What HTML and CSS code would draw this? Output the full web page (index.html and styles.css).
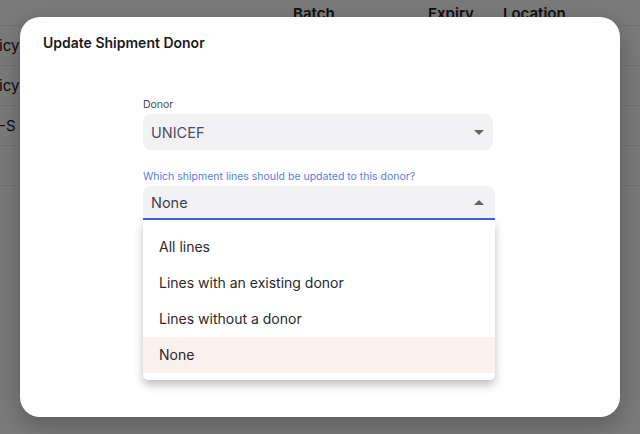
FILE: index.html
```html
<!DOCTYPE html>
<html lang="en">
<head>
    <meta charset="UTF-8">
    <title>Update Shipment Donor</title>
    <link rel="stylesheet" href="styles.css">
</head>
<body>
    <div class="page">
        <div class="table-head">
            <span class="col-name"></span>
            <span class="col-batch">Batch</span>
            <span class="col-expiry">Expiry</span>
            <span class="col-location">Location</span>
        </div>
        <div class="table-row"><span class="col-name">icy</span></div>
        <div class="table-row"><span class="col-name">icy</span></div>
        <div class="table-row"><span class="col-name">-S</span></div>
        <div class="table-row"><span class="col-name"></span></div>
    </div>

    <div class="overlay">
        <div class="dialog">
            <h1>Update Shipment Donor</h1>

            <div class="form">
                <label class="field-label">Donor</label>
                <div class="select">
                    <span>UNICEF</span>
                    <span class="arrow down"></span>
                </div>

                <label class="field-label focused">Which shipment lines should be updated to this donor?</label>
                <div class="dropdown">
                    <div class="select open">
                        <span>None</span>
                        <span class="arrow up"></span>
                    </div>
                    <ul class="menu">
                        <li>All lines</li>
                        <li>Lines with an existing donor</li>
                        <li>Lines without a donor</li>
                        <li class="selected">None</li>
                    </ul>
                </div>
            </div>
        </div>
    </div>
</body>
</html>
```

FILE: styles.css
```css
* { box-sizing: border-box; }
html, body { margin: 0; height: 100%; }
body { font-family: 'Inter', 'Roboto', sans-serif; background-color: #f4f4f4; overflow: hidden; position: relative; }

.page { color: #222; }
.table-head, .table-row { display: grid; grid-template-columns: 280px 148px 75px 1fr; align-items: center; border-bottom: 1px solid #e2e2e2; }
.table-head { height: 26px; font-weight: 600; font-size: 15px; padding-top: 2px; }
.table-head .col-batch { padding-left: 13px; }
.table-row { height: 40px; font-size: 15px; }
.table-row .col-name { margin-left: -1px; }

.overlay { position: absolute; inset: 0; background-color: rgba(0,0,0,0.5); display: flex; align-items: center; justify-content: center; }
.dialog { width: 600px; height: 400px; background-color: white; border-radius: 20px; padding: 19px 23px; box-shadow: 0 8px 24px rgba(0,0,0,0.25); }
.dialog h1 { font-size: 14px; font-weight: 600; color: #1a1a1a; margin: 0; line-height: 14px; }

.form { width: 352px; margin: 49px 0 0 100px; }
.field-label { display: block; font-size: 10.5px; color: #4a4a4a; margin-bottom: 3px; line-height: 12px; }
.field-label.focused { color: #5a7ce8; margin-top: 21px; }

.select { height: 36px; width: 350px; background-color: #f2f2f4; border-radius: 8px; display: flex; align-items: center; justify-content: space-between; padding: 0 9px 0 8px; font-size: 14.5px; color: #4b4d63; }
.select.open { width: 352px; height: 34px; border-radius: 8px 8px 0 0; border-bottom: 2px solid #3e63dd; color: #3f3f4a; padding-right: 11px; }

.arrow { width: 0; height: 0; border-left: 5px solid transparent; border-right: 5px solid transparent; }
.arrow.down { border-top: 5px solid #666; }
.arrow.up { border-bottom: 5px solid #666; }

.dropdown { position: relative; }
.menu { position: absolute; top: 34px; left: 0; width: 352px; list-style: none; margin: 0; padding: 9px 0 7px; background-color: white; border-radius: 0 0 5px 5px; box-shadow: 0 5px 10px rgba(0,0,0,0.25); }
.menu li { height: 36px; line-height: 36px; padding-left: 16px; font-size: 14px; color: #2a2a2a; }
.menu li.selected { background-color: #fbf1ef; }
```
